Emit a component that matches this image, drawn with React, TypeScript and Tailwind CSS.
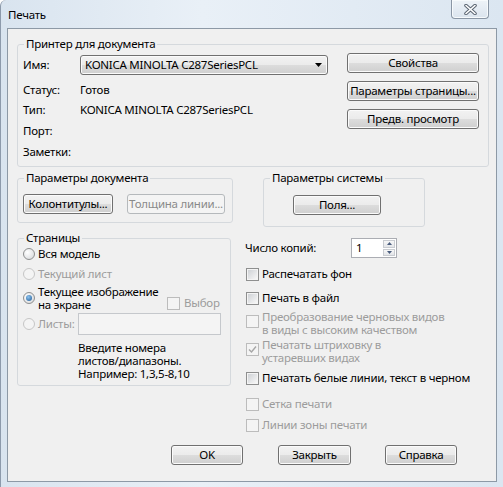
import type { ReactNode } from 'react';
import clsx from 'clsx';

function Btn({ children, className, disabled }: { children: ReactNode; className?: string; disabled?: boolean }) {
  return (
    <div
      className={clsx(
        'flex items-center justify-center rounded-[3px] border whitespace-nowrap',
        disabled
          ? 'border-[#b5b9bc] bg-[#f4f4f4] text-[#8a8a8a]'
          : 'border-[#707070] bg-[linear-gradient(#f2f2f2_0%,#ebebeb_50%,#dddddd_50%,#cfcfcf_100%)] shadow-[inset_0_0_0_1px_#fbfbfb]',
        className,
      )}
    >
      {children}
    </div>
  );
}

function Group({ title, className, children }: { title: string; className?: string; children: ReactNode }) {
  return (
    <fieldset className={clsx('border border-[#d5d9dd] rounded-[3px] min-w-0', className)}>
      <legend className="ml-[6px] px-[2px] leading-4">{title}</legend>
      {children}
    </fieldset>
  );
}

function Check({ checked, disabled }: { checked?: boolean; disabled?: boolean }) {
  return (
    <div
      className={clsx(
        'w-[13px] h-[13px] shrink-0 border p-[1px] flex',
        disabled ? 'border-[#bcbcbc] bg-[#f4f4f4]' : 'border-[#8e8f8f] bg-[#f4f4f4]',
      )}
    >
      <div
        className={clsx(
          'flex-1 flex items-center justify-center',
          disabled ? 'bg-[#f4f4f4]' : 'bg-[linear-gradient(135deg,#cfd2d6,#f7f7f7)]',
        )}
      >
        {checked && (
          <svg width="9" height="9" viewBox="0 0 9 9">
            <path d="M1 4.5 L3.5 7 L8 1.5" fill="none" stroke="#a6a6a6" strokeWidth="1.4" />
          </svg>
        )}
      </div>
    </div>
  );
}

function Radio({ selected, disabled }: { selected?: boolean; disabled?: boolean }) {
  return (
    <div
      className={clsx(
        'w-[12px] h-[12px] shrink-0 rounded-full border flex items-center justify-center',
        disabled
          ? 'border-[#c6c6c6] bg-[#f4f4f4]'
          : 'border-[#8e8f8f] bg-[radial-gradient(circle_at_35%_35%,#ffffff,#d3d5d8)]',
      )}
    >
      {selected && (
        <div className="w-[6px] h-[6px] rounded-full bg-[radial-gradient(circle_at_40%_35%,#8ec3ef,#1d5a95)]" />
      )}
    </div>
  );
}

function CheckRow({ children, checked, disabled, className, two }: { children: ReactNode; checked?: boolean; disabled?: boolean; className?: string; two?: boolean }) {
  return (
    <div className={clsx('flex pl-[1px] gap-[3px]', two ? 'items-start leading-[13px]' : 'items-center h-4', className)}>
      <div className={two ? 'mt-[5px]' : ''}>
        <Check checked={checked} disabled={disabled} />
      </div>
      <span className={disabled ? 'text-[#9c9c9c]' : ''}>{children}</span>
    </div>
  );
}

export default function App() {
  return (
    <div className="w-[503px] h-[487px] overflow-hidden flex flex-col bg-[linear-gradient(90deg,#d9e4ef,#e9f0f7_40%,#dbe6f1)] text-[11.5px] tracking-[-0.25px] leading-4 text-black whitespace-nowrap font-['Segoe_UI','Noto_Sans',sans-serif] rounded-tl-[6px] border-l border-[#8d9aab]">
      {/* title bar */}
      <div className="h-[28px] shrink-0 flex items-start">
        <span className="ml-[7px] mt-[7px]">Печать</span>
        <div className="ml-auto mr-[14px] w-[38px] h-[19px] border border-t-0 border-[#8a96a5] rounded-b-[4px] bg-[linear-gradient(#eef3f8,#dbe4ee)] shadow-[inset_0_0_0_1px_#f7fafc] flex items-center justify-center">
          <svg width="13" height="11" viewBox="0 0 13 11">
            <path d="M2 1.5 L11 9.5 M11 1.5 L2 9.5" stroke="#5c6673" strokeWidth="3.6" strokeLinecap="round" />
            <path d="M2 1.5 L11 9.5 M11 1.5 L2 9.5" stroke="#ffffff" strokeWidth="1.6" strokeLinecap="round" />
          </svg>
        </div>
      </div>

      {/* content */}
      <div className="ml-[6px] mr-[6px] h-[454px] border border-[#8d99a6] bg-[#f0f0f0] flex flex-col">
        <Group title="Принтер для документа" className="ml-[9px] mt-[7px] w-[472px] h-[131px]">
          <div className="flex pl-[5px] pr-[9px]">
            <div className="flex flex-col pt-[3px]">
              <div className="flex items-center h-[20px]">
                <span className="w-[57px]">Имя:</span>
                <div className="w-[248px] h-[20px] rounded-[3px] border border-[#707070] bg-[linear-gradient(#f2f2f2_0%,#ebebeb_50%,#dddddd_50%,#cfcfcf_100%)] shadow-[inset_0_0_0_1px_#fbfbfb] flex items-center pl-[4px] pr-[5px]">
                  <span>KONICA MINOLTA C287SeriesPCL</span>
                  <svg className="ml-auto" width="7" height="4" viewBox="0 0 7 4">
                    <path d="M0 0 H7 L3.5 4 Z" fill="#000" />
                  </svg>
                </div>
              </div>
              <div className="flex items-center h-[20px] mt-[5px]">
                <span className="w-[57px]">Статус:</span>
                <span>Готов</span>
              </div>
              <div className="flex items-center h-[20px]">
                <span className="w-[57px]">Тип:</span>
                <span>KONICA MINOLTA C287SeriesPCL</span>
              </div>
              <div className="flex items-center h-[21px]">
                <span className="w-[57px]">Порт:</span>
              </div>
              <div className="flex items-center h-[21px]">
                <span className="w-[57px]">Заметки:</span>
              </div>
            </div>
            <div className="ml-auto flex flex-col gap-[8px] pt-[1px]">
              <Btn className="w-[132px] h-[20px]">Свойства</Btn>
              <Btn className="w-[132px] h-[20px]">Параметры страницы...</Btn>
              <Btn className="w-[132px] h-[20px]">Предв. просмотр</Btn>
            </div>
          </div>
        </Group>

        <div className="flex items-start mt-[3px]">
          {/* left column */}
          <div className="ml-[9px] flex flex-col">
            <Group title="Параметры документа" className="w-[216px] h-[53px]">
              <div className="flex gap-[14px] pl-[5px] pt-[8px]">
                <Btn className="w-[90px] h-[20px]">Колонтитулы...</Btn>
                <Btn disabled className="w-[98px] h-[20px]">Толщина линии...</Btn>
              </div>
            </Group>
            <Group title="Страницы" className="mt-[7px] w-[214px] h-[156px]">
              <div className="flex flex-col pl-[5px]">
                <div className="flex items-center gap-[3px] h-4">
                  <Radio />
                  <span>Вся модель</span>
                </div>
                <div className="flex items-center gap-[3px] h-4 mt-[4px]">
                  <Radio disabled />
                  <span className="text-[#9c9c9c]">Текущий лист</span>
                </div>
                <div className="flex items-start mt-[3px]">
                  <div className="flex items-center gap-[3px] h-[26px] w-[144px]">
                    <Radio selected />
                    <span className="leading-[13px]">
                      Текущее изображение
                      <br />
                      на экране
                    </span>
                  </div>
                  <div className="flex items-center gap-[4px] h-4 mt-[10px]">
                    <Check disabled />
                    <span className="text-[#9c9c9c]">Выбор</span>
                  </div>
                </div>
                <div className="flex items-center h-[22px] mt-[2px]">
                  <div className="flex items-center gap-[3px] w-[55px]">
                    <Radio disabled />
                    <span className="text-[#9c9c9c]">Листы:</span>
                  </div>
                  <div className="w-[143px] h-[22px] border border-[#c5c8cc] bg-[#f4f4f4]" />
                </div>
                <div className="ml-[55px] mt-[6px] leading-[13px]">
                  Введите номера
                  <br />
                  листов/диапазоны.
                  <br />
                  Например: 1,3,5-8,10
                </div>
              </div>
            </Group>
          </div>

          {/* right column */}
          <div className="ml-[12px] flex flex-col">
            <Group title="Параметры системы" className="ml-[18px] w-[162px] h-[57px]">
              <div className="pl-[29px] pt-[9px]">
                <Btn className="w-[88px] h-[20px]">Поля...</Btn>
              </div>
            </Group>
            <div className="flex items-center h-[20px] mt-[11px]">
              <span className="w-[106px]">Число копий:</span>
              <div className="w-[46px] h-[20px] border border-[#abadb3] bg-white flex items-stretch">
                <span className="pl-[4px] flex items-center">1</span>
                <div className="ml-auto w-[14px] flex flex-col p-[1px] gap-[1px]">
                  <div className="flex-1 border border-[#c9ccd1] bg-[linear-gradient(#f7f7f7,#e3e5e8)] flex items-center justify-center">
                    <svg width="5" height="3" viewBox="0 0 5 3">
                      <path d="M0 3 L2.5 0 L5 3 Z" fill="#4a5d7e" />
                    </svg>
                  </div>
                  <div className="flex-1 border border-[#c9ccd1] bg-[linear-gradient(#f7f7f7,#e3e5e8)] flex items-center justify-center">
                    <svg width="5" height="3" viewBox="0 0 5 3">
                      <path d="M0 0 L5 0 L2.5 3 Z" fill="#4a5d7e" />
                    </svg>
                  </div>
                </div>
              </div>
            </div>
            <CheckRow className="mt-[8px]">Распечатать фон</CheckRow>
            <CheckRow className="mt-[8px]">Печать в файл</CheckRow>
            <CheckRow two disabled className="mt-[4px]">
              Преобразование черновых видов
              <br />в виды с высоким качеством
            </CheckRow>
            <CheckRow two disabled checked className="mt-[2px]">
              Печатать штриховку в
              <br />
              устаревших видах
            </CheckRow>
            <CheckRow className="mt-[6px]">Печатать белые линии, текст в черном</CheckRow>
            <CheckRow disabled className="mt-[10px]">Сетка печати</CheckRow>
            <CheckRow disabled className="mt-[5px]">Линии зоны печати</CheckRow>
          </div>
        </div>

        <div className="flex mt-[12px] ml-[163px]">
          <Btn className="w-[72px] h-[20px]">OK</Btn>
          <Btn className="w-[73px] h-[20px] ml-[35px]">Закрыть</Btn>
          <Btn className="w-[72px] h-[20px] ml-[34px]">Справка</Btn>
        </div>
      </div>
    </div>
  );
}
